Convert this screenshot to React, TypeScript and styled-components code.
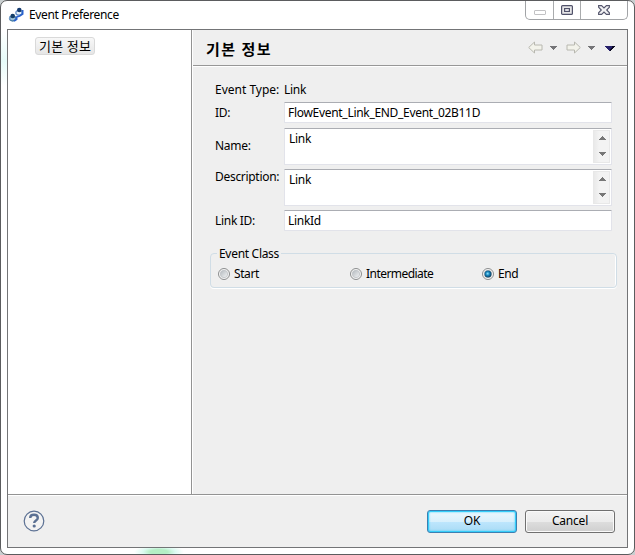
import React from "react";
import styled, { createGlobalStyle } from "styled-components";

const GlobalStyle = createGlobalStyle`
  * { box-sizing: border-box; }
  html, body { margin: 0; padding: 0; background: #c9cfd0; overflow: hidden; }
  body { font: 12px/16px "Noto Sans", "Noto Sans CJK KR", sans-serif; color: #000; }
`;

const Window = styled.div`
  width: 635px;
  height: 555px;
  padding: 0 6px 6px;
  border: 1px solid #5b5c5e;
  border-radius: 7px;
  background:
    radial-gradient(ellipse 25px 7px at 158px 551px, #b5efc5 0 35%, #dcfbf1 65%, transparent 100%),
    linear-gradient(180deg, transparent 30px, #e6fbf9 60px, transparent 85px) 0 0 / 6px 100% no-repeat,
    #fff;
`;

const TitleBar = styled.header`
  display: flex;
  height: 28px;
  padding-left: 1px;
`;

const Title = styled.div`
  flex: 1;
  padding: 6px 0 0 5px;
  letter-spacing: -0.35px;
`;

const AppIcon = styled.svg`
  margin-top: 5px;
`;

const Controls = styled.div`
  display: flex;
  width: 103px;
  height: 19px;
  border: 1px solid #a1a3a6;
  border-top: 0;
  border-radius: 0 0 5px 5px;
`;

const Control = styled.div<{ $w: number }>`
  width: ${(p) => p.$w}px;
  height: 18px;
  & + & { border-left: 1px solid #a9abad; }
  svg { display: block; margin: 0 auto; }
`;

const Client = styled.main`
  height: 519px;
  width: 621px;
  border: 1px solid #737476;
  background: #efefef;
`;

const Body = styled.div`
  display: flex;
  height: 466px;
  border-bottom: 1px solid #fff;
  box-shadow: inset 0 -1px #939393;
`;

const Tree = styled.nav`
  width: 184px;
  height: 464px;
  padding: 7px 0 0 27px;
  background: #fff;
  border-right: 1px solid #939393;
`;

const TreeItem = styled.div`
  width: 60px;
  height: 18px;
  padding-left: 3px;
  border: 1px solid #d9d9d9;
  border-radius: 3px;
  background: linear-gradient(#f8f8f8, #e6e6e6);
  font: 13px/16px "Noto Sans CJK KR", sans-serif;
  letter-spacing: 0.3px;
  white-space: nowrap;
`;

const Page = styled.section`
  flex: 1;
  height: 464px;
  border-left: 1px solid #fff;
`;

const PageHeader = styled.div`
  display: flex;
  justify-content: space-between;
  height: 37px;
  padding: 10px 11px 0 13px;
  border-bottom: 1px solid #fff;
  box-shadow: inset 0 -1px #979797;
`;

const Heading = styled.h1`
  margin: 0;
  font: bold 15px/18px "Noto Sans CJK KR", sans-serif;
  letter-spacing: 1.5px;
`;

const Form = styled.div`
  display: grid;
  grid-template-columns: 69px 328px;
  grid-template-rows: 16px 21px 37px 37px 22px;
  row-gap: 4px;
  padding: 15px 0 0 22px;
`;

const Label = styled.label<{ $top?: number; $ls?: number }>`
  padding-top: ${(p) => p.$top ?? 0}px;
  letter-spacing: ${(p) => p.$ls ?? -0.3}px;
  white-space: nowrap;
`;

const Field = styled.div<{ $h: number; $offset?: number; $multi?: boolean }>`
  display: flex;
  justify-content: space-between;
  height: ${(p) => p.$h}px;
  margin-top: ${(p) => p.$offset ?? 0}px;
  padding: ${(p) => (p.$multi ? "1px 1px 1px 4px" : "2px 3px")};
  border: 1px solid #e2e3ea;
  border-top-color: #abadb3;
  border-radius: 1px;
  background: #fff;
  letter-spacing: -0.3px;
`;

const FieldText = styled.span`
  padding-top: 1px;
`;

const ScrollBar = styled.div`
  display: flex;
  flex-direction: column;
  justify-content: space-between;
  align-items: center;
  width: 17px;
  height: 33px;
  padding: 5px 0 6px 1px;
  border: 1px solid #e8e8e8;
  background: linear-gradient(90deg, #e9e9e9, #f3f3f3 35%);
  svg { display: block; }
`;

const Group = styled.fieldset`
  display: flex;
  width: 407px;
  height: 43px;
  margin: 14px 0 0 17px;
  padding: 5px 0 0 7px;
  border: 1px solid #d0dde6;
  border-radius: 4px;
  box-shadow: 0 1px #fff, inset -1px 0 #fff;
`;

const Legend = styled.legend`
  padding: 1px 2px 0;
  height: 16px;
  margin-left: -1px;
  letter-spacing: -0.3px;
`;

const Option = styled.div<{ $ls?: number }>`
  display: flex;
  align-items: center;
  gap: 4px;
  width: 132px;
  height: 16px;
  letter-spacing: ${(p) => p.$ls ?? -0.4}px;
`;

const Footer = styled.footer`
  display: flex;
  height: 51px;
  padding: 14px 12px 0 15px;
`;

const Help = styled.svg`
  margin-right: auto;
`;

const Button = styled.button<{ $primary?: boolean }>`
  width: 90px;
  height: 23px;
  margin-left: 8px;
  padding: 0 0 1px;
  border: 1px solid ${(p) => (p.$primary ? "#3c7fb1" : "#707070")};
  border-radius: 3px;
  background: ${(p) =>
    p.$primary
      ? "linear-gradient(#e9f6fd 0 10%, #d9f0fc 50%, #bee6fd 51%, #a9dbf5)"
      : "linear-gradient(#f3f3f3, #ebebeb 50%, #dddddd 51%, #cfcfcf)"};
  box-shadow: ${(p) => (p.$primary ? "inset 0 0 0 1px #35cdf9, inset 0 0 2px 1px #35cdf9" : "inset 0 0 0 1px #fafafa")};
  font: inherit;
  letter-spacing: -0.2px;
`;

const Tri = ({ up = false }: { up?: boolean }) => (
  <svg width="7" height="4" viewBox="0 0 7 4" shapeRendering="crispEdges">
    <path d={up ? "M3 0h1v1h1v1h1v1h1v1H0V3h1V2h1V1h1z" : "M0 0h7v1H6v1H5v1H4v1H3V3H2V2H1V1H0z"} fill="#777" />
  </svg>
);

const Radio = ({ on = false }: { on?: boolean }) => (
  <svg width="12" height="12" viewBox="0 0 12 12">
    <defs>
      <linearGradient id="ring" x2="1" y2="1">
        <stop stopColor="#b2b8bd" />
        <stop offset="1" stopColor="#f4f5f6" />
      </linearGradient>
      <radialGradient id="dot" cx=".45" cy=".45" r=".6">
        <stop stopColor="#8ee6ff" />
        <stop offset=".45" stopColor="#1682ba" />
        <stop offset="1" stopColor="#0c324e" />
      </radialGradient>
    </defs>
    <circle cx="6" cy="6" r="5.5" fill="#f6f6f6" stroke="#8b8d8e" />
    <circle cx="6" cy="6" r="3.7" fill="url(#ring)" stroke="#bfc3c6" strokeWidth=".8" />
    {on && <circle cx="6" cy="6" r="3.5" fill="url(#dot)" />}
  </svg>
);

const Toolbar = () => (
  <svg width="88" height="16" viewBox="0 0 88 16">
    <g fill="#f3f3eb" stroke="#b8b8b0">
      <path d="M.7 7.5 6.5 2v3h7.5v5H6.5v3z" />
      <path d="M52.3 7.5 46.5 2v3h-7.5v5h7.5v3z" />
    </g>
    <g shapeRendering="crispEdges">
      <path d="M22 6h7v1h-1v1h-1v1h-1v1h-1V9h-1V8h-1V7h-1z" fill="#747477" />
      <path d="M60 6h7v1h-1v1h-1v1h-1v1h-1V9h-1V8h-1V7h-1z" fill="#747477" />
      <path d="M77 6h10v1h-1v1h-1v1h-1v1h-1v1h-2v-1h-1V9h-1V8h-1V7h-1z" fill="#25206a" />
      <path d="M84 6h3v1h-1v1h-1v1h-1v1h-1v1h-1V9h1V8h1z" fill="#080820" />
    </g>
  </svg>
);

export default function App() {
  return (
    <>
      <GlobalStyle />
      <Window>
        <TitleBar>
          <AppIcon width="16" height="18" viewBox="0 0 16 18">
            <ellipse cx="11" cy="6.8" rx="3.2" ry="2.4" fill="#e6f1fa" stroke="#6b93c8" strokeWidth="1.3" />
            <ellipse cx="4.7" cy="12.6" rx="3.2" ry="2.4" fill="#9fc3d8" stroke="#4a7fa8" strokeWidth="1.3" />
            <path d="M14.6 4v4l-3 2-3 .8M8.6 10.5v2.8L6 15" fill="none" stroke="#2a62cc" strokeWidth="1.8" />
            <path d="M1.8 10.5v3.3" stroke="#7ca3cf" strokeWidth="1.4" />
            <circle cx="4.7" cy="10" r="2.3" fill="#153f69" />
            <circle cx="11.3" cy="4" r="2.3" fill="#153b70" />
          </AppIcon>
          <Title>Event Preference</Title>
          <Controls>
            <Control $w={27}>
              <svg width="12" height="18">
                <rect x=".5" y="9.5" width="11" height="4" rx=".5" fill="#fff" stroke="#c2c2c4" />
              </svg>
            </Control>
            <Control $w={27}>
              <svg width="12" height="18">
                <rect x=".6" y="4.6" width="10.8" height="8.8" rx="1" fill="#e6e6e8" stroke="#51526a" strokeWidth="1.2" />
                <rect x="3.6" y="7.6" width="4.8" height="2.8" fill="#fff" stroke="#51526a" strokeWidth="1.2" />
              </svg>
            </Control>
            <Control $w={47}>
              <svg width="12" height="18">
                <path d="M.6 4.6h3L6 7l2.4-2.4h3v1.6L8.7 9l2.7 2.8v1.6h-3L6 11l-2.4 2.4h-3v-1.6L3.3 9 .6 6.2z" fill="#f1f1f3" stroke="#55566d" strokeWidth="1.1" />
              </svg>
            </Control>
          </Controls>
        </TitleBar>
        <Client>
          <Body>
            <Tree>
              <TreeItem>기본 정보</TreeItem>
            </Tree>
            <Page>
              <PageHeader>
                <Heading>기본 정보</Heading>
                <Toolbar />
              </PageHeader>
              <Form>
                <Label $ls={0}>Event Type:</Label>
                <Label>Link</Label>
                <Label $top={3}>ID:</Label>
                <Field $h={21}>FlowEvent_Link_END_Event_02B11D</Field>
                <Label $top={11}>Name:</Label>
                <Field $h={37} $offset={1} $multi>
                  <FieldText>Link</FieldText>
                  <ScrollBar><Tri up /><Tri /></ScrollBar>
                </Field>
                <Label $top={1}>Description:</Label>
                <Field $h={37} $offset={1} $multi>
                  <FieldText>Link</FieldText>
                  <ScrollBar><Tri up /><Tri /></ScrollBar>
                </Field>
                <Label $top={4}>Link ID:</Label>
                <Field $h={21} $offset={1}>LinkId</Field>
              </Form>
              <Group>
                <Legend>Event Class</Legend>
                <Option><Radio />Start</Option>
                <Option $ls={-0.55}><Radio />Intermediate</Option>
                <Option><Radio on />End</Option>
              </Group>
            </Page>
          </Body>
          <Footer>
            <Help width="22" height="22" viewBox="0 0 22 22">
              <circle cx="11" cy="11" r="9.8" fill="#f3f3f3" stroke="#5b7093" strokeWidth="1.2" />
              <path d="M7.2 8c0-2.2 1.6-3.2 3.8-3.2s3.8 1.1 3.8 3.1c0 2.5-3.6 2.6-3.6 5.1" fill="none" stroke="#5b7093" strokeWidth="2.4" />
              <circle cx="11.2" cy="16" r="1.6" fill="#5b7093" />
            </Help>
            <Button $primary>OK</Button>
            <Button>Cancel</Button>
          </Footer>
        </Client>
      </Window>
    </>
  );
}
